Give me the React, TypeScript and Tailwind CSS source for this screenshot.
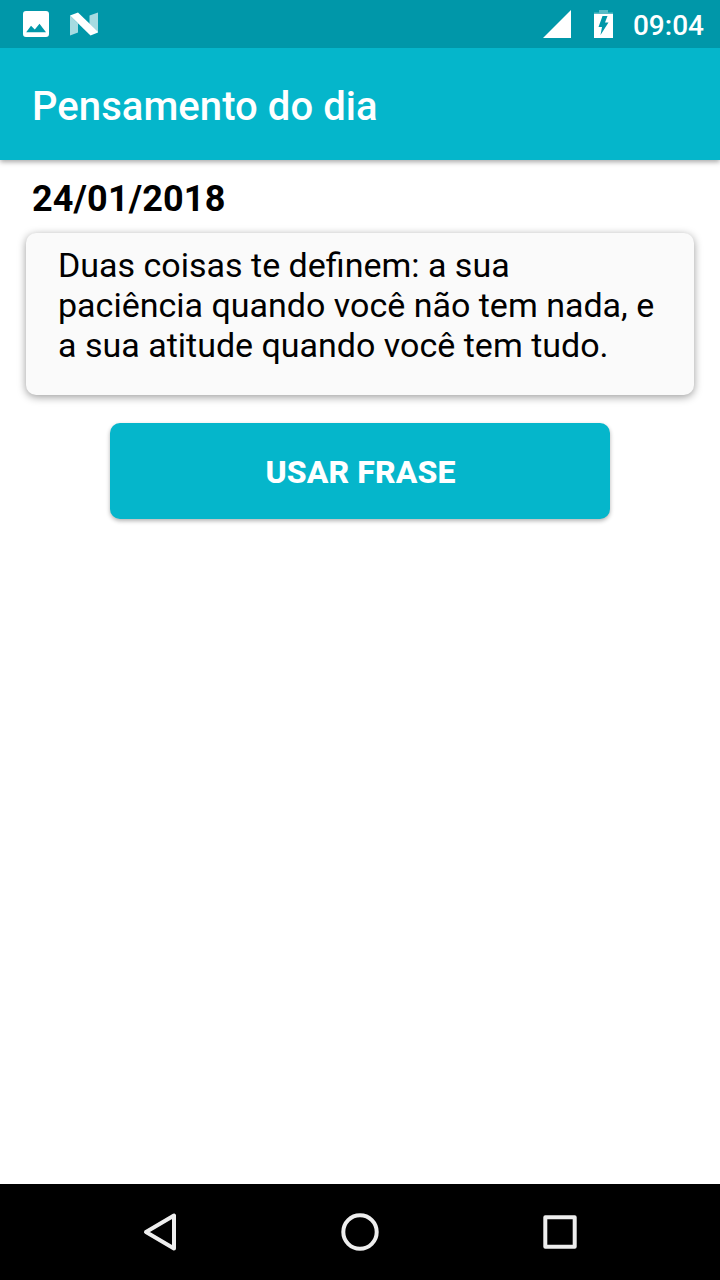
import type { ReactNode } from 'react'

const PHRASE = {
  date: '24/01/2018',
  text: 'Duas coisas te definem: a sua paciência quando você não tem nada, e a sua atitude quando você tem tudo.',
}

function StatusBar() {
  return (
    <div className="relative z-10 flex h-12 items-center bg-[#0097a9] pl-[22px] pr-4 text-white">
      <svg className="h-7 w-7" viewBox="0 0 28 28" fill="currentColor">
        <path
          fillRule="evenodd"
          d="M4 1H24Q27 1 27 4V24Q27 27 24 27H4Q1 27 1 24V4Q1 1 4 1ZM4.2 22.3H24L17.5 13.8L12.8 19.5L9 15.8Z"
        />
      </svg>
      <svg className="ml-5 h-6 w-7" viewBox="0 0 28 24" fill="currentColor">
        <path opacity=".65" d="M0 3.5L8 11.5V20.5L0 23.5ZM28 .5V20L19.5 12V3.5Z" />
        <path d="M0 3.5L8 .5L28 19.8V20.5L20.5 23.5Z" />
      </svg>
      <svg className="ml-auto h-7 w-7" viewBox="0 0 28 28" fill="currentColor">
        <path d="M28 0V28H0Z" />
      </svg>
      <svg className="ml-[22px] h-7 w-5" viewBox="0 0 20 28" fill="currentColor">
        <path opacity=".35" d="M6 0H15V2.5H20V4H1V2.5H6Z" />
        <path fillRule="evenodd" d="M1 4H20V28H1ZM9.5 6L5.5 17H9L7.5 25L15.5 12.5H12L14.5 6Z" />
      </svg>
      <span className="ml-5 pt-[3px] text-[28px] font-medium leading-none">09:04</span>
    </div>
  )
}

function NavButton({ children }: { children: ReactNode }) {
  return (
    <button className="flex h-24 w-[200px] items-center justify-center">
      <svg className="h-10 w-10" viewBox="0 0 40 40" fill="none" stroke="#eee" strokeWidth="4" strokeLinejoin="round">
        {children}
      </svg>
    </button>
  )
}

export default function App() {
  return (
    <div className="flex h-[1280px] w-[720px] flex-col bg-white font-[Roboto,sans-serif] text-black">
      <StatusBar />
      <header className="flex h-28 items-center bg-[#05b6cb] pl-8 pt-1.5 shadow-[0_2px_5px_rgba(0,0,0,0.35)]">
        <h1 className="text-[40px] font-medium leading-none tracking-[0.06px] text-white">Pensamento do dia</h1>
      </header>

      <main className="flex flex-1 flex-col">
        <h2 className="ml-8 mt-[18px] text-[36px] font-bold leading-[42px] tracking-[0.15px]">{PHRASE.date}</h2>
        <div className="mx-[26px] mt-[13px] h-[162px] rounded-[10px] bg-[#fafafa] px-8 pt-3 shadow-[0_2px_8px_rgba(0,0,0,0.4)]">
          <p className="text-[34px] leading-10">{PHRASE.text}</p>
        </div>
        <button className="mx-auto mt-7 h-24 w-[500px] rounded-[10px] bg-[#05b6cb] pl-px pt-0.5 text-[32px] font-extrabold tracking-[0.1px] text-white shadow-[0_2px_4px_rgba(0,0,0,0.3)]">
          USAR FRASE
        </button>
      </main>

      <nav className="flex h-24 justify-center bg-black">
        <NavButton>
          <path d="M6 20L34 3.5V36.5Z" />
        </NavButton>
        <NavButton>
          <circle cx="20" cy="20" r="16.7" />
        </NavButton>
        <NavButton>
          <rect x="5.3" y="5.3" width="29.4" height="29.4" />
        </NavButton>
      </nav>
    </div>
  )
}
